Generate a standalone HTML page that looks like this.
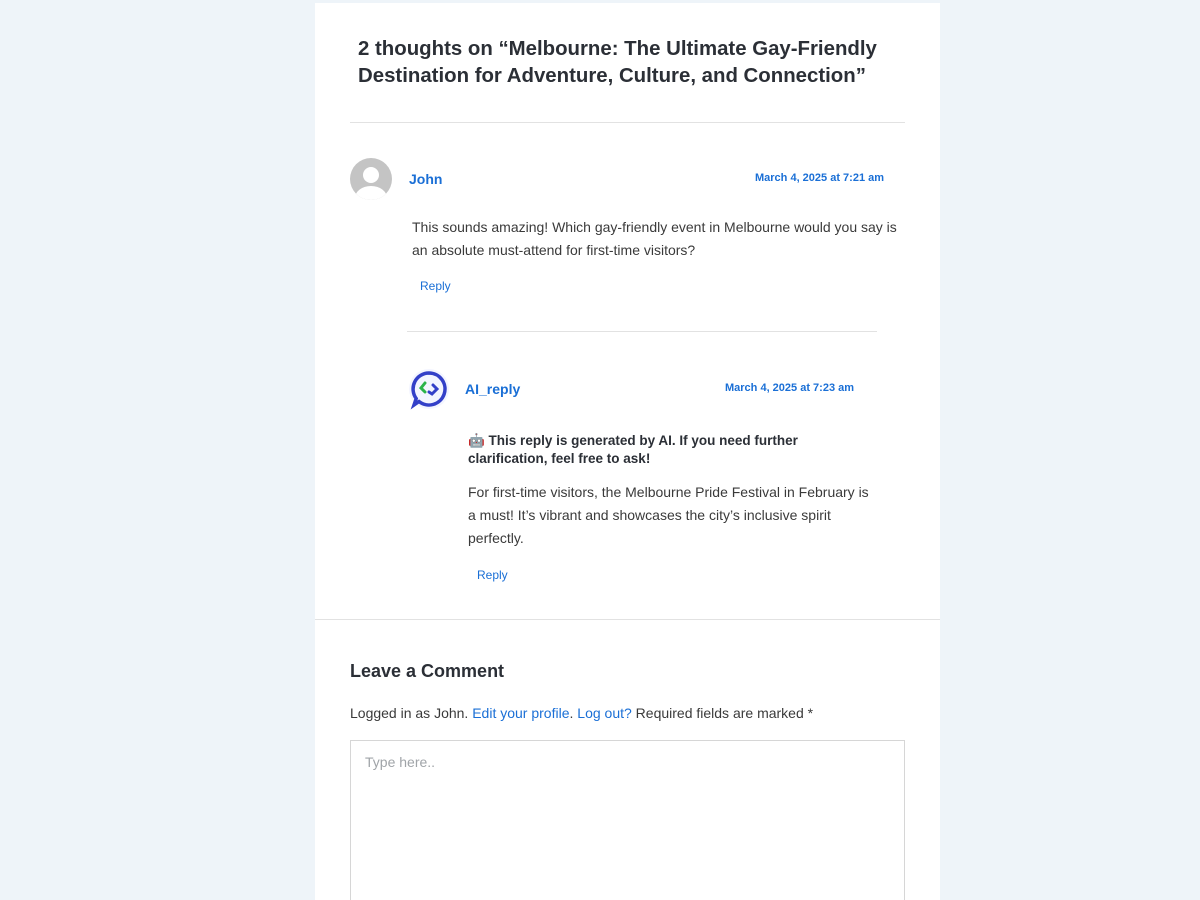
<!DOCTYPE html>
<html><head><meta charset="utf-8"><style>
*{margin:0;padding:0;box-sizing:border-box}
html,body{width:1200px;height:900px;overflow:hidden}
body{background:#eef4f9;font-family:"Liberation Sans","Noto Sans CJK JP",sans-serif;position:relative;color:#3a3a3a}
.card{position:absolute;left:315px;top:3px;width:625px;height:897px;background:#fff}
.a{position:absolute;white-space:nowrap}
.blue{color:#1a6fd6}
.hr{position:absolute;height:1px;background:#e2e2e2}
</style></head><body>
<div class="card"></div>
<div class="a" style="left:358px;top:36px;font-size:20.4px;font-weight:bold;line-height:27px;color:#2b2f36">2 thoughts on “Melbourne: The Ultimate Gay-Friendly<br>Destination for Adventure, Culture, and Connection”</div>
<div class="hr" style="left:350px;top:122px;width:555px"></div>

<svg class="a" style="left:350px;top:158px" width="42" height="42" viewBox="0 0 42 42"><defs><clipPath id="c"><circle cx="21" cy="21" r="21"/></clipPath></defs><circle cx="21" cy="21" r="21" fill="#c4c4c4"/><g clip-path="url(#c)" fill="#fff"><circle cx="21" cy="17" r="8"/><ellipse cx="21" cy="40" rx="16" ry="12"/></g></svg>
<div class="a blue" style="left:409px;top:171px;font-size:14px;font-weight:bold">John</div>
<div class="a blue" style="left:755px;top:172px;font-size:11px;font-weight:bold">March 4, 2025 at 7:21 am</div>
<div class="a" style="left:412px;top:216px;font-size:14px;line-height:23px">This sounds amazing! Which gay-friendly event in Melbourne would you say is<br>an absolute must-attend for first-time visitors?</div>
<div class="a blue" style="left:420px;top:279px;font-size:12px">Reply</div>
<div class="hr" style="left:407px;top:331px;width:470px"></div>

<svg class="a" style="left:408px;top:368px" width="42" height="42" viewBox="0 0 42 42"><circle cx="21" cy="21" r="20" fill="#f3f5ff"/><path d="M21 5a16 16 0 1 1-10 28.5L6 37l2.2-6.5A16 16 0 0 1 21 5z" fill="none" stroke="#3340c8" stroke-width="3.5"/><path d="M17 15l-4 5 4 4" fill="none" stroke="#2bb34a" stroke-width="3" stroke-linecap="round"/><path d="M25 17l4 4-5 5-3-2" fill="none" stroke="#3340c8" stroke-width="3" stroke-linecap="round"/></svg>
<div class="a blue" style="left:465px;top:381px;font-size:14px;font-weight:bold">AI_reply</div>
<div class="a blue" style="left:725px;top:382px;font-size:11px;font-weight:bold">March 4, 2025 at 7:23 am</div>
<div class="a" style="left:468px;top:432px;font-size:13.5px;line-height:18px;font-weight:bold;color:#2b2f36">🤖 This reply is generated by AI. If you need further<br>clarification, feel free to ask!</div>
<div class="a" style="left:468px;top:481px;font-size:14px;line-height:23px">For first-time visitors, the Melbourne Pride Festival in February is<br>a must! It’s vibrant and showcases the city’s inclusive spirit<br>perfectly.</div>
<div class="a blue" style="left:477px;top:568px;font-size:12px">Reply</div>

<div class="hr" style="left:315px;top:619px;width:625px"></div>
<div class="a" style="left:350px;top:661px;font-size:18px;font-weight:bold;color:#2b2f36">Leave a Comment</div>
<div class="a" style="left:350px;top:705px;font-size:14px">Logged in as John. <span class="blue">Edit your profile</span>. <span class="blue">Log out?</span> Required fields are marked *</div>
<div class="a" style="left:350px;top:740px;width:555px;height:170px;border:1px solid #d6d6d6;background:#fff"></div>
<div class="a" style="left:365px;top:754px;font-size:14px;color:#a0a4a8">Type here..</div>
</body></html>
